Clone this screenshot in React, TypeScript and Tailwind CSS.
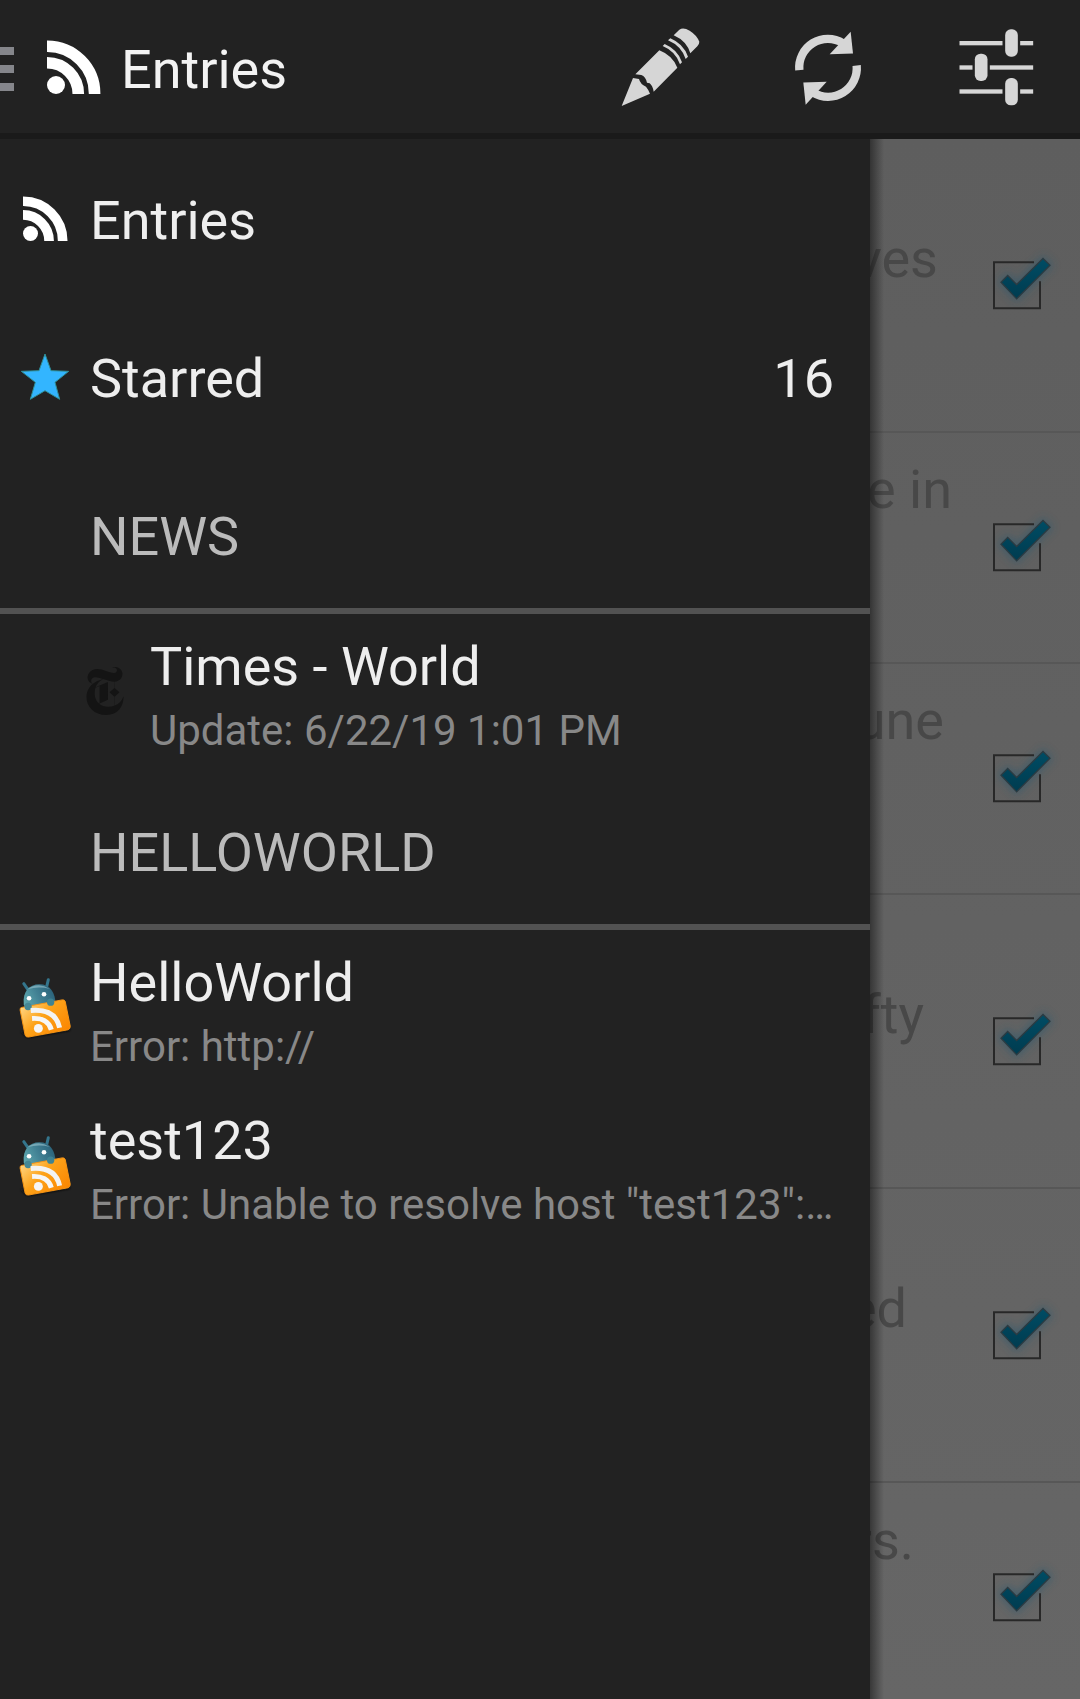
import React from "react";
import { SiNewyorktimes } from "react-icons/si";

function RssIcon({ className }: { className: string }) {
  return (
    <svg viewBox="0 0 54 54" className={className} fill="none" stroke="#fff" strokeWidth="11.6">
      <circle cx="9" cy="45" r="9" fill="#fff" stroke="none" />
      <path d="M0 22.7A31.3 31.3 0 0 1 31.3 54" />
      <path d="M0 6.3A47.4 47.4 0 0 1 47.6 54" />
    </svg>
  );
}

function PencilIcon() {
  return (
    <svg viewBox="60 50 240 240" className="size-20" fill="#d6d6d6">
      <path d="M65 287L99 203L117 206Q121 222 138 229Q144 236 150 250Z" />
      <path d="M106 192L178 120Q217 135 232 172L161 244Q158 226 149 219L141 217Q137 199 124 194Z" />
      <path d="M188 107L194 101Q234 118 246 156L240 162Q227 123 188 107Z" />
      <path d="M204 90L211 84Q250 100 264 139L257 146Q244 107 204 90Z" />
      <path d="M221 75L238 58Q250 50 269 61Q290 74 298 94Q298 101 292 108L271 129Q260 92 221 75Z" />
    </svg>
  );
}

function RefreshIcon() {
  return (
    <svg viewBox="580 60 210 230" className="w-[70px] h-[77px]" fill="#d6d6d6">
      <path d="M599 180A86 86 0 0 1 730 99" fill="none" stroke="#d6d6d6" strokeWidth="25" />
      <path d="M753 65L760 130L690 132Z" />
      <path d="M771 166A86 86 0 0 1 640 247" fill="none" stroke="#d6d6d6" strokeWidth="25" />
      <path d="M611 217L681 215L618 284Z" />
    </svg>
  );
}

function SlidersIcon() {
  return (
    <svg viewBox="84 50 230 240" className="w-[77px] h-20" fill="#d6d6d6">
      <rect x="88" y="92" width="129" height="13" />
      <rect x="270" y="92" width="39" height="13" />
      <rect x="88" y="165" width="39" height="13" />
      <rect x="179" y="165" width="130" height="13" />
      <rect x="88" y="237" width="129" height="13" />
      <rect x="270" y="237" width="39" height="13" />
      <rect x="225" y="57" width="38" height="82" rx="17" />
      <rect x="134" y="130" width="38" height="82" rx="17" />
      <rect x="225" y="203" width="38" height="82" rx="17" />
    </svg>
  );
}

function StarIcon() {
  return (
    <svg viewBox="60 515 150 150" className="size-[50px]">
      <path
        d="M135 521L153 571L206 573L165 606L179 657L135 631L91 657L106 606L64 573L117 571Z"
        fill="#33b5ff"
        stroke="#2f8f97"
        strokeWidth="3"
      />
    </svg>
  );
}

function FeedDroidIcon() {
  return (
    <svg viewBox="55 110 165 190" className="w-[55px] h-[63px] overflow-visible">
      <defs>
        <linearGradient id="card" x1="0" y1="0.1" x2="1" y2="0.8">
          <stop offset="0" stopColor="#ffdc90" />
          <stop offset="0.45" stopColor="#fda31a" />
          <stop offset="1" stopColor="#fb8500" />
        </linearGradient>
        <linearGradient id="droid" x1="0" y1="0.7" x2="1" y2="0.3">
          <stop offset="0" stopColor="#5fa9b0" />
          <stop offset="0.5" stopColor="#418093" />
          <stop offset="1" stopColor="#286078" />
        </linearGradient>
        <filter id="soft" x="-20%" y="-50%" width="140%" height="200%">
          <feGaussianBlur stdDeviation="4" />
        </filter>
      </defs>
      <path d="M62 275L82 294L212 272L208 260Z" fill="#111" filter="url(#soft)" />
      <path d="M72 130L85 149M146 118L141 140" stroke="#34758c" strokeWidth="9" strokeLinecap="round" />
      <path d="M72 192C68 155 88 132 119 132C151 132 168 156 168 196L80 212Z" fill="url(#droid)" />
      <path d="M83 147Q116 124 151 146Q116 137 83 147Z" fill="#9bc4ce" opacity="0.6" />
      <path
        d="M65 202L188 179Q195 178 197 184L212 258Q213 266 206 269L86 291Q78 292 76 285L61 210Q60 203 65 202Z"
        fill="url(#card)"
        stroke="#f79414"
        strokeWidth="3"
      />
      <circle cx="88" cy="174" r="7" fill="#fff" />
      <circle cx="133" cy="162" r="7" fill="#fff" />
      <circle cx="85" cy="199" r="11" fill="#458896" />
      <circle cx="153" cy="186" r="11" fill="#3f8392" />
      <circle cx="116" cy="265" r="13.5" fill="#f6f6f6" />
      <path d="M97 235C126 233 148 244 155 269" fill="none" stroke="#f6f6f6" strokeWidth="15" />
      <path d="M93 211C137 207 171 221 180 263" fill="none" stroke="#f3f3f3" strokeWidth="15" />
    </svg>
  );
}

function CheckedBox() {
  return (
    <svg viewBox="420 104.5 210 180" className="w-[70px] h-[60px] overflow-visible">
      <defs>
        <linearGradient id="tick" x1="0" y1="0" x2="0" y2="1">
          <stop offset="0" stopColor="#004c64" />
          <stop offset="1" stopColor="#003c50" />
        </linearGradient>
        <filter id="glow" x="-40%" y="-40%" width="180%" height="180%">
          <feGaussianBlur stdDeviation="13" />
        </filter>
      </defs>
      <path d="M452 186L473 165L500 192L579 114L601 135L500 237Z" fill="#2c5a70" stroke="#2c5a70" strokeWidth="12" opacity="0.6" filter="url(#glow)" />
      <path d="M552 126H432V264H570V183" fill="none" stroke="#282828" strokeWidth="6" />
      <path d="M453 186L473 166L500 193L579 115L600 135L500 236Z" fill="url(#tick)" stroke="#2c3b42" strokeWidth="4" />
    </svg>
  );
}

function GroupRow({ label }: { label: string }) {
  return (
    <div className="h-[158px] border-b-[6px] border-[#525252] pt-[49px] pl-[90px] text-[54px] leading-[64px] text-[#bbbbbb]">
      {label}
    </div>
  );
}

function FeedRow({ icon, title, sub, nested }: { icon: React.ReactNode; title: string; sub: string; nested?: boolean }) {
  return (
    <div className="flex h-[158px]">
      <div className={nested ? "w-[150px] pt-[53px] pl-[81px]" : "w-[90px] pt-[47px] pl-[18px]"}>{icon}</div>
      <div className="min-w-0 flex-1 pr-9 pt-[21px]">
        <div className="text-[54px] leading-[64px]">{title}</div>
        <div className="truncate text-[42px] leading-[50px] pt-[7px] text-[#888888]">{sub}</div>
      </div>
    </div>
  );
}

const entries = [
  { text: "ves", row: "h-[294px]", pad: "pt-[88px]", width: "w-[68px]", box: "" },
  { text: "e in", row: "h-[231px]", pad: "pt-[25px]", width: "w-[82px]", box: "pb-[2px]" },
  { text: "une", row: "h-[231px]", pad: "pt-[25px]", width: "w-[74px]", box: "pb-[2px]" },
  { text: "fty", row: "h-[294px]", pad: "pt-[88px]", width: "w-[54px]", box: "" },
  { text: "ed", row: "h-[294px]", pad: "pt-[88px]", width: "w-[37px]", box: "" },
  { text: "rs.", row: "h-[231px]", pad: "pt-[26px]", width: "w-[44px]", box: "pb-[2px]" },
];

export default function App() {
  return (
    <div className="flex h-[1699px] w-[1080px] flex-col overflow-hidden bg-[#222222] font-[Roboto,sans-serif] text-[#eeeeee]">
      <header className="flex h-[139px] shrink-0 border-b-[6px] border-[#1a1a1a]">
        <div className="flex w-[14px] flex-col gap-[10px] pt-[47px]">
          <div className="h-2 bg-[#85868b]" />
          <div className="h-2 bg-[#85868b]" />
          <div className="h-2 bg-[#85868b]" />
        </div>
        <RssIcon className="ml-[33px] mt-10 size-[54px]" />
        <h1 className="ml-5 mt-[38px] w-[499px] text-[54px] leading-[64px] text-[#f3f3f3]">Entries</h1>
        <div className="mt-[27px] flex">
          <PencilIcon />
          <div className="ml-[93px] mt-[3px]">
            <RefreshIcon />
          </div>
          <div className="ml-[95px]">
            <SlidersIcon />
          </div>
        </div>
      </header>

      <div className="flex min-h-0 flex-1">
        <nav className="w-[870px] shrink-0 pt-px">
          <div className="flex h-[158px] text-[54px] leading-[64px]">
            <RssIcon className="ml-[23px] mr-[22px] mt-[56px] size-[45px]" />
            <div className="pt-[49px]">Entries</div>
          </div>
          <div className="flex h-[158px] text-[54px] leading-[64px]">
            <div className="w-[90px] pl-5 pt-[54px]">
              <StarIcon />
            </div>
            <div className="flex flex-1 justify-between pr-9 pt-[49px]">
              <span>Starred</span>
              <span>16</span>
            </div>
          </div>
          <GroupRow label="NEWS" />
          <FeedRow nested icon={<SiNewyorktimes className="size-12 text-[#141414]" />} title="Times - World" sub="Update: 6/22/19 1:01 PM" />
          <GroupRow label="HELLOWORLD" />
          <FeedRow icon={<FeedDroidIcon />} title="HelloWorld" sub="Error: http://" />
          <FeedRow icon={<FeedDroidIcon />} title="test123" sub={'Error: Unable to resolve host "test123":\u2026'} />
        </nav>

        <main className="relative w-[210px] overflow-hidden bg-linear-to-b from-[#5e5e5e] to-[#666666]">
          {entries.map((e) => (
            <div key={e.text} className={`flex border-b-2 border-[#575757] ${e.row}`}>
              <div className={`flex shrink-0 justify-end text-[54px] leading-[64px] whitespace-nowrap text-[#484848] ${e.pad} ${e.width}`}>
                {e.text}
              </div>
              <div className={`ml-auto flex items-center pr-5 ${e.box}`}>
                <CheckedBox />
              </div>
            </div>
          ))}
          <div className="absolute inset-y-0 left-0 w-[14px] bg-linear-to-r from-black/45 to-transparent" />
        </main>
      </div>
    </div>
  );
}
